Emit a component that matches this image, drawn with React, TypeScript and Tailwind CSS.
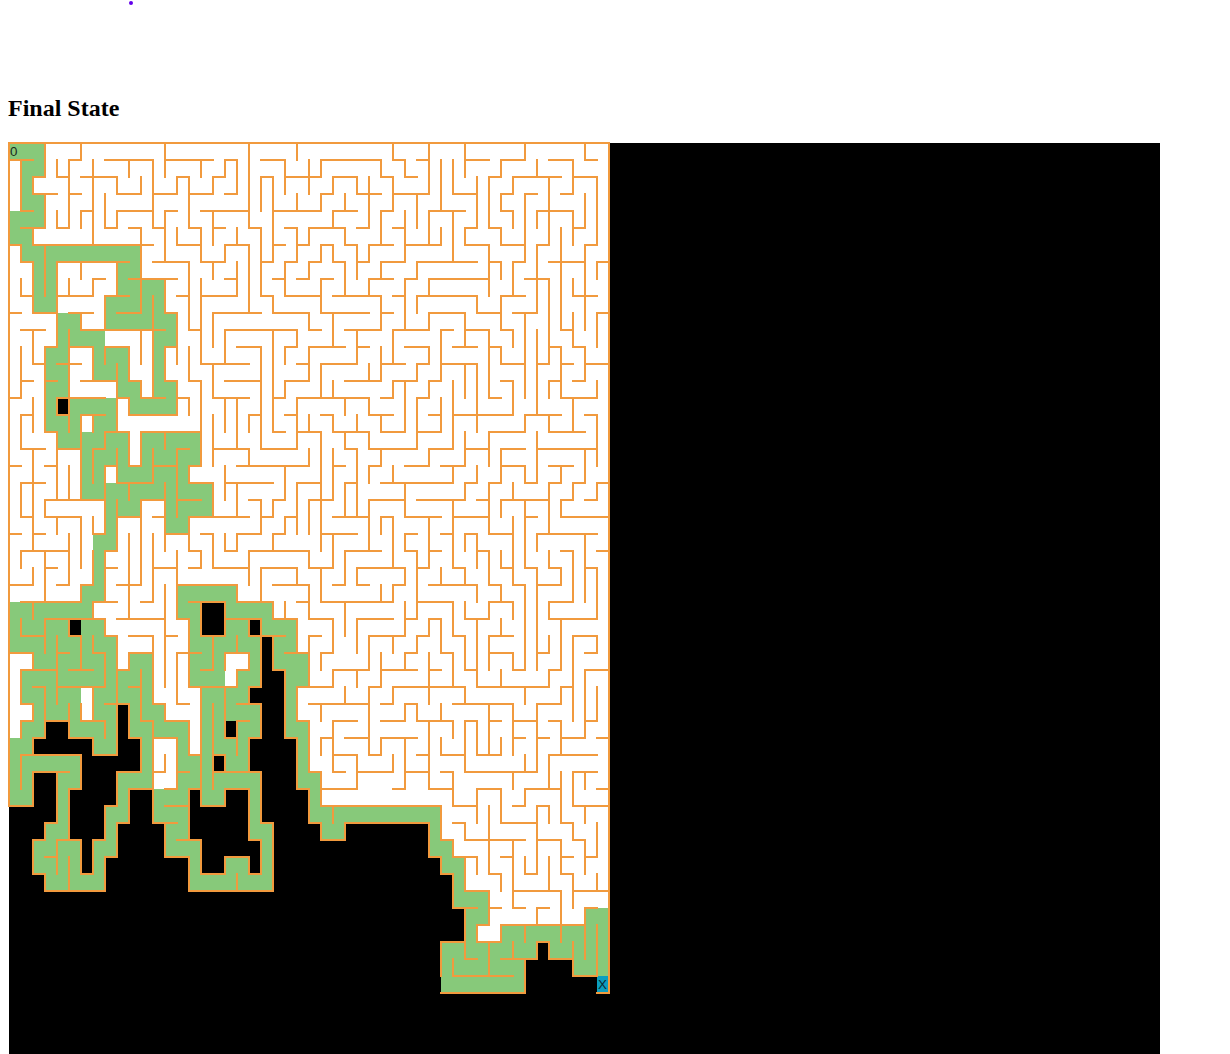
const H = `0 0 50,1 0 2,2 2 3,3 2 4,4 1 2,5 1 3,6 2 12,6 0 1,7 1 2,10 2 4,7 4 10,9 4 7,8 7 8,9 8 10,10 9 11,8 10 14,11 6 13,10 5 7,12 5 7,12 8 10,12 13 14,10 13 14,12 3 4,9 1 2,10 0 1,11 1 3,1 5 6,5 4 5,2 4 5,3 5 6,2 6 9,3 9 11,1 8 12,5 12 13,1 13 17,5 8 9,4 9 12,3 12 14,2 14 15,5 15 16,7 16 17,3 15 17,4 13 14,4 16 17,4 6 7,5 10 11,6 14 16,7 12 15,9 14 15,11 15 16,9 16 17,
11 25 26,10 22 25,9 21 22,5 20 21,1 18 19,2 17 18,3 18 19,1 21 23,2 23 26,1 26 31,2 31 32,4 31 32,6 30 32,7 29 30,6 28 29,5 25 28,6 24 25,5 23 24,7 23 24,9 23 26,8 26 27,10 26 30,12 25 28,1 32 33,2 33 34,2 21 22,7 21 22,4 22 26,3 26 27,2 27 29,3 29 31,5 29 30,4 27 29,3 32 35,4 16 20,5 17 18,6 18 20,7 16 18,10 17 21,8 18 19,9 16 19,11 18 24,12 23 24,12 19 21,6 22 23,5 32 33,6 33 36,7 31 33,8 30 32,9 27 31,11 28 31,10 31 32,12 29 30,11 32 35,12 33 35,6 26 27,7 27 28,7 25 26,8 24 25,8 22 23,8 33 34,9 32 33,
1 34 35,2 33 34,3 37 39,5 38 39,6 38 40,1 38 40,1 41 43,2 40 41,5 40 41,6 41 43,3 43 44,7 42 43,9 41 43,10 39 41,9 34 39,1 45 47,3 46 47,2 42 46,3 41 42,4 41 42,6 44 45,8 43 45,10 42 44,4 44 47,5 47 48,2 47 49,6 48 49,1 48 49,11 46 47,12 47 48,7 45 48,7 49 50,9 47 49,10 49 50,4 35 38,7 34 39,8 33 34,8 35 40,9 32 33,10 35 38,11 38 40,12 37 39,11 36 37,12 40 41,11 41 42,7 40 41,12 45 46,
13 2 3,14 1 2,14 3 4,13 4 6,14 6 9,14 10 11,15 11 13,14 13 14,16 10 14,15 9 10,14 15 16,13 16 17,19 15 16,20 15 17,15 14 15,15 4 8,16 4 5,16 6 8,17 8 10,18 7 8,19 10 11,17 11 16,19 8 9,23 7 8,20 9 12,19 12 14,18 14 15,21 11 13,22 9 11,24 8 9,21 14 16,22 15 17,24 15 16,23 13 15,22 12 13,21 3 8,17 3 4,18 4 6,22 3 6,16 1 2,18 1 3,19 0 1,19 3 4,20 1 3,22 1 2,23 0 1,23 2 3,24 1 5,23 16 17,15 0 1,
13 16 20,15 17 20,14 18 21,18 21 24,15 24 30,16 30 32,17 31 33,14 32 34,15 31 32,18 17 20,19 19 25,21 22 23,22 21 22,21 20 21,23 19 21,24 18 19,16 20 21,17 22 23,15 22 23,14 23 25,13 24 25,13 26 29,14 28 31,13 31 33,16 23 24,17 24 26,20 24 26,16 26 27,17 27 30,18 30 34,18 28 29,19 27 28,21 25 27,20 28 29,22 27 30,19 30 31,19 33 34,20 31 34,21 30 33,24 28 31,22 31 32,23 26 29,23 33 34,20 18 22,22 16 20,20 16 17,22 23 24,23 22 23,24 20 25,23 16 17,
13 34 35,13 32 33,14 35 36,13 36 39,16 37 42,14 41 42,18 35 37,19 33 35,15 34 35,18 32 34,17 34 36,16 35 36,17 32 33,15 40 41,12 40 41,13 41 43,16 43 46,17 40 43,18 38 40,19 36 38,20 32 37,13 44 45,12 45 46,15 46 49,13 46 47,14 47 48,13 48 50,14 45 46,17 45 48,16 48 49,18 44 49,20 43 44,19 41 43,18 41 43,20 40 41,23 40 42,21 41 45,20 45 46,19 45 47,20 47 48,21 46 47,22 46 50,20 49 50,21 48 49,22 43 44,23 44 49,24 49 50,24 46 47,21 39 40,21 34 38,20 38 39,21 32 33,22 33 36,24 35 36,22 37 40,23 36 37,23 33 34,24 33 34,23 38 39,24 39 40,
25 3 4,26 0 2,26 4 5,26 6 7,27 1 6,27 7 9,28 3 8,25 8 9,26 9 11,28 9 13,27 11 12,25 12 14,28 14 15,36 15 16,26 14 17,27 15 17,29 16 17,25 15 16,29 1 3,30 4 5,29 5 6,31 5 7,30 7 8,32 4 8,29 8 9,36 7 9,35 5 7,30 0 2,31 1 4,33 1 2,34 1 2,32 2 3,35 2 3,36 1 6,37 2 5,34 3 5,34 6 8,33 8 9,35 10 11,33 9 10,31 9 10,30 10 12,29 10 12,32 10 11,34 11 12,33 12 13,34 13 15,30 14 16,33 14 15,32 15 17,31 16 17,35 12 14,37 14 15,37 12 13,29 13 14,
25 17 20,26 16 19,27 19 22,28 22 24,30 23 25,32 24 27,34 24 25,37 25 26,27 16 18,29 16 18,28 18 21,29 20 23,31 22 23,35 23 24,31 16 17,32 16 19,31 19 20,30 18 20,32 20 21,33 19 21,35 20 21,35 18 19,34 19 20,36 17 18,25 25 27,26 27 28,27 26 32,26 32 33,25 29 33,26 29 30,25 21 24,26 22 25,28 25 27,30 26 27,27 24 25,28 29 32,29 25 26,29 30 33,31 27 30,31 31 34,28 33 34,32 30 31,36 30 31,35 31 34,32 32 34,33 31 32,33 25 30,34 27 29,34 31 33,35 28 30,35 26 27,36 27 29,37 29 32,37 27 28,
25 34 35,28 33 34,29 32 33,27 34 37,29 37 38,31 38 39,28 38 40,27 40 42,26 40 41,26 35 39,25 37 38,25 41 42,26 42 43,31 42 43,30 40 42,29 40 42,25 43 44,26 44 46,25 45 46,27 45 47,28 45 49,25 48 49,31 45 46,32 39 45,30 44 45,29 47 49,30 48 49,32 46 47,33 44 46,37 38 44,31 48 50,35 46 48,34 45 46,36 45 49,35 49 50,34 48 49,29 34 35,30 33 34,31 32 34,28 35 36,30 36 37,32 32 38,31 35 36,33 37 42,34 42 44,34 40 41,34 34 37,33 33 34,34 32 33,35 32 34,36 34 35,36 36 38,34 38 39,36 39 41,35 42 43,35 44 45,37 33 35,37 36 37,37 47 49,
39 0 2,40 3 4,41 2 3,43 2 3,44 3 8,42 8 9,40 9 10,38 10 12,37 9 11,39 8 9,41 7 8,43 6 7,41 4 6,42 3 4,38 5 6,38 13 14,38 15 16,37 17 21,40 21 22,44 15 22,42 13 15,40 12 14,39 13 15,41 14 16,43 16 18,42 18 20,43 20 21,41 20 21,38 18 20,39 16 18,
38 32 33,38 35 37,39 37 39,38 43 46,40 46 47,41 47 48,42 48 49,39 47 50,38 49 50,39 42 43,38 39 41,43 40 41,40 41 44,39 44 45,41 38 43,40 37 38,45 42 43,42 41 42,41 44 46,42 46 47,43 46 47,44 42 46,43 43 44,44 47 50,39 32 36,41 36 37,42 37 39,44 38 40,46 39 40,47 39 41,46 41 48,45 48 49,49 47 49,40 32 35,42 35 36,43 36 37,45 37 39,47 36 38,49 37 42,48 38 39,48 41 44,47 44 45,48 45 47,50 36 43,45 44 45,45 40 41,50 49 50,
39 26 36,40 25 26,41 26 28,40 28 32,38 24 25,38 26 29`;

const V = `0 0 39,50 0 50,3 0 2,1 1 4,2 2 3,3 3 5,2 5 6,1 6 7,2 7 10,3 6 9,4 7 10,6 7 8,5 8 9,7 8 9,9 7 9,8 9 11,11 6 10,6 10 11,5 11 13,7 12 13,8 12 13,10 12 13,11 11 13,12 9 13,13 8 10,14 10 13,13 12 13,3 12 13,4 10 12,1 8 9,2 11 13,1 12 13,6 0 1,5 1 5,4 4 5,4 1 2,7 1 6,9 2 3,11 2 3,10 1 2,12 1 5,13 0 2,16 1 2,8 3 5,9 4 5,14 2 3,15 2 5,16 5 7,13 4 7,6 4 5,11 5 6,14 5 6,15 7 11,16 8 13,15 12 13,
20 0 5,21 5 9,22 9 10,25 10 11,24 0 1,18 1 2,17 2 3,19 1 3,23 1 3,25 1 3,26 1 2,31 1 2,32 2 4,31 4 6,30 6 7,29 6 8,28 5 6,25 5 6,24 5 7,23 7 9,26 8 10,27 10 12,25 12 13,32 0 1,33 1 2,21 2 4,22 2 7,26 3 4,27 2 3,29 2 3,30 2 5,24 3 4,28 3 4,27 4 5,17 4 6,19 5 6,18 6 7,16 5 7,20 6 10,17 10 12,17 7 8,19 7 9,18 11 13,22 11 13,24 11 12,23 12 13,21 12 13,33 4 7,31 7 8,30 8 9,31 9 11,29 11 13,31 12 13,32 11 13,26 6 7,27 6 7,28 7 9,25 7 8,33 8 11,
35 0 3,36 1 4,37 1 3,39 2 5,38 5 6,40 6 9,38 0 2,43 0 1,41 1 2,40 2 5,41 5 6,43 3 7,42 7 9,41 9 11,39 9 10,34 9 10,44 1 2,47 1 3,42 2 3,41 3 4,42 4 5,45 2 6,44 6 10,45 8 13,43 10 13,44 11 13,44 4 5,47 4 6,48 3 5,49 2 6,48 6 11,48 0 1,46 5 11,47 10 12,48 12 13,49 7 8,47 8 9,49 10 12,36 5 6,35 4 6,37 4 7,34 7 8,35 8 9,34 3 5,35 10 11,38 10 12,40 11 13,36 11 13,35 12 13,41 12 13,42 11 12,41 7 8,46 12 13,
1 12 15,2 12 13,3 12 17,5 12 17,7 12 14,10 12 14,11 14 15,12 12 15,11 12 13,13 12 14,14 14 16,10 15 16,9 13 17,14 12 13,15 12 14,16 12 13,16 14 19,15 19 20,15 15 16,4 15 16,6 16 21,7 16 17,8 17 18,7 18 20,10 17 19,11 17 19,13 17 18,9 18 20,8 19 23,7 22 23,10 20 21,12 18 20,14 18 22,13 20 24,11 21 25,9 21 24,8 24 25,15 22 24,16 24 25,3 21 22,4 17 21,5 19 21,6 22 25,4 22 23,5 23 25,2 15 17,1 16 18,2 18 24,1 20 22,1 24 25,3 24 25,14 24 25,10 23 25,12 23 25,
17 13 15,21 12 18,24 15 18,30 15 16,31 16 17,33 14 17,32 14 15,16 14 19,18 15 17,19 15 18,17 16 19,20 18 19,25 18 19,23 19 21,22 21 22,21 21 23,19 23 24,18 23 24,20 16 17,22 12 17,23 14 15,25 12 14,23 12 13,26 13 15,29 12 13,27 14 15,31 12 14,30 13 14,32 12 13,25 16 17,26 17 21,24 20 23,27 16 17,30 17 18,28 15 16,29 16 17,28 17 18,29 18 22,27 18 21,25 21 23,26 21 24,28 20 22,31 18 19,30 19 20,32 19 20,33 20 22,30 21 24,28 24 25,31 22 23,32 22 25,27 23 25,33 23 24,18 19 21,19 20 22,17 20 22,23 22 23,22 23 24,20 24 25,25 24 25,17 23 25,
35 12 13,34 13 14,36 12 14,38 13 15,39 13 17,42 14 16,37 14 18,35 18 19,35 14 15,34 15 18,36 15 17,40 12 15,41 12 13,43 12 15,44 12 16,43 16 17,40 17 19,38 17 19,37 19 20,46 12 15,49 14 15,48 12 14,47 15 17,45 16 17,49 16 19,44 17 20,43 19 20,41 18 20,40 20 23,42 22 25,42 20 21,41 21 22,45 20 23,46 19 20,48 18 20,47 20 21,49 20 21,46 21 22,43 21 25,44 23 24,48 23 25,47 24 25,45 24 25,38 20 21,39 19 20,35 22 25,37 21 25,34 24 25,38 23 24,39 23 25,40 24 25,41 24 25,45 14 15,
2 25 26,3 24 27,5 24 26,6 24 25,7 24 26,6 26 27,7 27 28,8 24 27,10 24 28,11 24 26,12 24 27,14 24 28,15 28 32,16 27 29,13 26 32,2 27 28,1 28 29,3 28 30,4 29 33,5 28 29,6 29 31,7 29 30,8 30 32,8 28 29,9 29 36,7 35 36,5 33 35,2 30 31,1 31 33,2 33 34,1 34 35,3 32 35,2 35 36,6 33 34,7 32 34,8 34 35,10 33 35,11 35 37,10 30 31,12 29 33,11 31 34,13 33 34,12 34 40,14 30 33,16 32 36,14 35 38,13 36 37,15 34 36,
17 24 25,20 24 26,19 26 27,22 27 28,24 28 30,25 30 32,24 32 34,25 34 37,18 27 29,16 27 29,20 28 29,21 28 29,21 29 32,22 29 31,23 31 35,24 35 38,17 29 31,19 31 32,18 30 31,20 30 31,19 29 30,20 32 33,21 33 35,20 35 37,18 32 35,19 34 36,17 33 37,18 36 37,25 24 25,27 24 25,28 24 26,26 25 27,32 26 27,33 25 26,29 25 26,31 26 27,32 24 25,21 25 27,24 25 26,25 26 28,27 28 30,26 30 31,23 27 28,28 27 29,29 28 30,25 29 30,33 27 29,30 29 31,27 31 32,29 31 32,32 29 30,31 30 32,33 30 31,30 32 36,31 35 36,32 32 33,28 32 33,26 33 34,27 34 37,26 35 36,29 36 38,32 36 37,
34 24 28,35 24 25,37 27 29,38 29 31,39 28 32,38 27 28,40 27 28,42 27 28,41 26 27,40 24 26,39 26 27,36 25 26,38 25 26,37 24 25,39 24 25,41 24 25,42 24 26,43 26 31,42 30 31,40 29 31,41 28 29,43 24 25,44 25 31,46 25 26,45 24 25,47 24 27,45 27 28,49 25 28,48 24 27,46 28 31,45 31 32,41 31 32,45 29 30,49 29 30,47 29 34,46 32 33,44 33 37,48 31 35,46 34 36,45 36 38,49 32 34,34 29 30,33 30 31,35 28 29,36 28 30,37 30 32,35 30 33,38 32 33,42 33 36,40 33 36,36 33 34,37 34 35,34 33 34,33 33 34,43 32 33,33 35 38,35 34 38,36 35 36,38 34 37,39 34 36,41 35 36,43 36 37,37 37 39,42 37 38,46 37 40,47 37 39,48 37 38,
1 36 38,2 37 39,4 37 40,3 40 41,2 41 43,3 43 44,8 42 44,9 40 42,10 38 40,9 37 39,8 39 41,7 41 43,6 41 43,4 41 43,5 42 44,5 38 41,6 36 38,15 38 41,16 36 38,17 36 38,21 37 40,22 40 44,15 42 44,13 40 42,16 41 43,18 42 43,20 42 43,21 41 43,20 38 41,18 38 39,16 38 39,19 43 44,
47 40 41,48 41 43,49 40 42,48 39 40,43 38 39,41 38 40,39 38 40,40 39 43,41 43 44,44 39 43,45 39 40,38 40 41,42 41 45,46 41 43,47 43 45,45 42 44,46 44 47,43 42 43,49 43 44,36 39 41,37 41 42,39 42 43,38 42 44,40 44 46,39 46 47,41 46 47,48 45 48,49 46 49,47 47 49,35 40 42,36 42 43,37 43 45,38 45 48,36 47 49,37 48 49,40 47 49,42 47 48,44 47 48,45 47 48,43 46 47,43 48 50,44 45 46,25 38 40,26 37 39,26 40 41,28 40 41,27 39 40,29 37 38`;

const wallPath = () => {
  const parse = (s: string) => s.split(",").map((t) => t.trim().split(" ").map(Number));
  const h = parse(H).map(([j, a, b]) => `M${a * 12} ${j * 17}H${b * 12}`);
  const v = parse(V).map(([i, a, b]) => `M${i * 12} ${a * 17}V${b * 17}`);
  return h.concat(v).join("");
};

// row -> "a-b" spans
const GREEN: Record<number, string> = {
  0: "0-2", 1: "1-2", 2: "1", 3: "1-2", 4: "0-2", 5: "0-1", 6: "1-10", 7: "2-3 9-10", 8: "2-3 9-12", 9: "2-3 8-12",
  10: "4-5 8-13", 11: "4-7 12-13", 12: "3-4 7-9 12", 13: "3-4 7-9 12", 14: "3-4 9-10 12-13", 15: "3 5-8 10-13",
  16: "3-5 7-8", 17: "4-9 11-15", 18: "6-9 11-15", 19: "6-7 9-14", 20: "6-16", 21: "8-10 13-16", 22: "8 13-14",
  23: "7-8", 24: "7", 25: "7", 26: "6-7 14-18", 27: "0-6 14-15 18-21", 28: "0-4 6-7 15 18-19 21-23",
  29: "0-8 15-20 22-23", 30: "2-8 10-11 15-17 20 22-24", 31: "1-11 15-17 19-20 23-24", 32: "1-5 7-11 16-19 23",
  33: "2-5 7-8 10-12 16-20 23", 34: "1-2 5-8 10-14 16-17 19-20 23-24", 35: "0-1 7-8 11 14 16-19 24",
  36: "0-5 11 14-16 18-19 24", 37: "0-1 4-5 9-11 14-20 24-25", 38: "0-1 4 9 12-14 16-17 20 25",
  39: "4 8-9 12-14 20 25-35", 40: "3-4 8 13-14 20-21 26-27 35", 41: "2-5 7-8 13-15 21 35-36", 42: "2-5 7 15 18-19 21 36-37",
  43: "3-7 15-21 37", 44: "37-39", 45: "38-39 48-49", 46: "38 41-49", 47: "36-43 45-49", 48: "36-42 47-49", 49: "36-42",
};
const BLACK: Record<number, string> = {
  15: "4", 27: "16-17", 28: "5 16-17 20", 29: "21", 30: "21", 31: "21-22", 32: "20-22", 33: "9 21-22",
  34: "3-4 9 18 21-22", 35: "2-6 9-10 20-23", 36: "6-10 17 20-23", 37: "2-3 6-8 21-23",
  38: "2-3 5-8 10-11 15 18-19 21-24", 39: "0-3 5-7 10-11 15-19 21-24", 40: "0-2 5-7 9-12 15-19 22-25 28-34",
  41: "0-1 6 9-12 16-20 22-34", 42: "0-1 6 8-14 16-17 20 22-35", 43: "0-2 8-14 22-36", 44: "0-36", 45: "0-37", 46: "0-37",
  47: "0-35 44", 48: "0-35 43-46", 49: "0-35 43-48",
};

const spans = (s?: string) =>
  (s ? s.split(" ") : []).map((p) => {
    const [a, b] = p.split("-").map(Number);
    return [a, b === undefined ? a : b] as const;
  });

function Cells() {
  const rows = Array.from({ length: 50 }, (_, j) => j);
  return (
    <>
      {rows.map((j) => {
        const black = spans(BLACK[j]);
        const cols = Array.from({ length: 50 }, (_, i) => i).filter((i) => !black.some(([a, b]) => i >= a && i <= b));
        return cols.map((i) => (
          <rect key={`w${j}-${i}`} x={i * 12} y={j * 17} width={12} height={17} fill="#ffffff" />
        ));
      })}
      {rows.map((j) =>
        spans(GREEN[j]).map(([a, b]) => (
          <rect key={`g${j}-${a}`} x={a * 12} y={j * 17} width={(b - a + 1) * 12} height={17} fill="#87c97a" />
        )),
      )}
    </>
  );
}

export default function App() {
  return (
    <div className="relative h-[1054px] overflow-hidden bg-white pt-[95px]">
      <div className="absolute left-[129px] top-[1px] h-1 w-1 rounded-full bg-[#6200ea]" />
      <h2 className="ml-2 text-[24px] font-bold leading-[27px] text-black [font-family:'Liberation_Serif',serif]">
        Final State
      </h2>
      <div className="ml-[9px] mt-[21px] h-[911px] w-[1151px] bg-black">
        <svg width="1151" height="911" viewBox="0 0 1151 911" className="block overflow-visible">
          <Cells />
          <rect x={588} y={833} width={12} height={17} fill="#0b9ebf" />
          <path d={wallPath()} fill="none" stroke="#f19a3e" strokeWidth={2} strokeLinecap="square" />
          <text x={1} y={13} fontSize={13.33} fill="#1a2a1a" fontFamily="'Liberation Sans', sans-serif">0</text>
          <text x={589} y={846} fontSize={13.33} fill="#0a2a35" fontFamily="'Liberation Sans', sans-serif">X</text>
        </svg>
      </div>
    </div>
  );
}
